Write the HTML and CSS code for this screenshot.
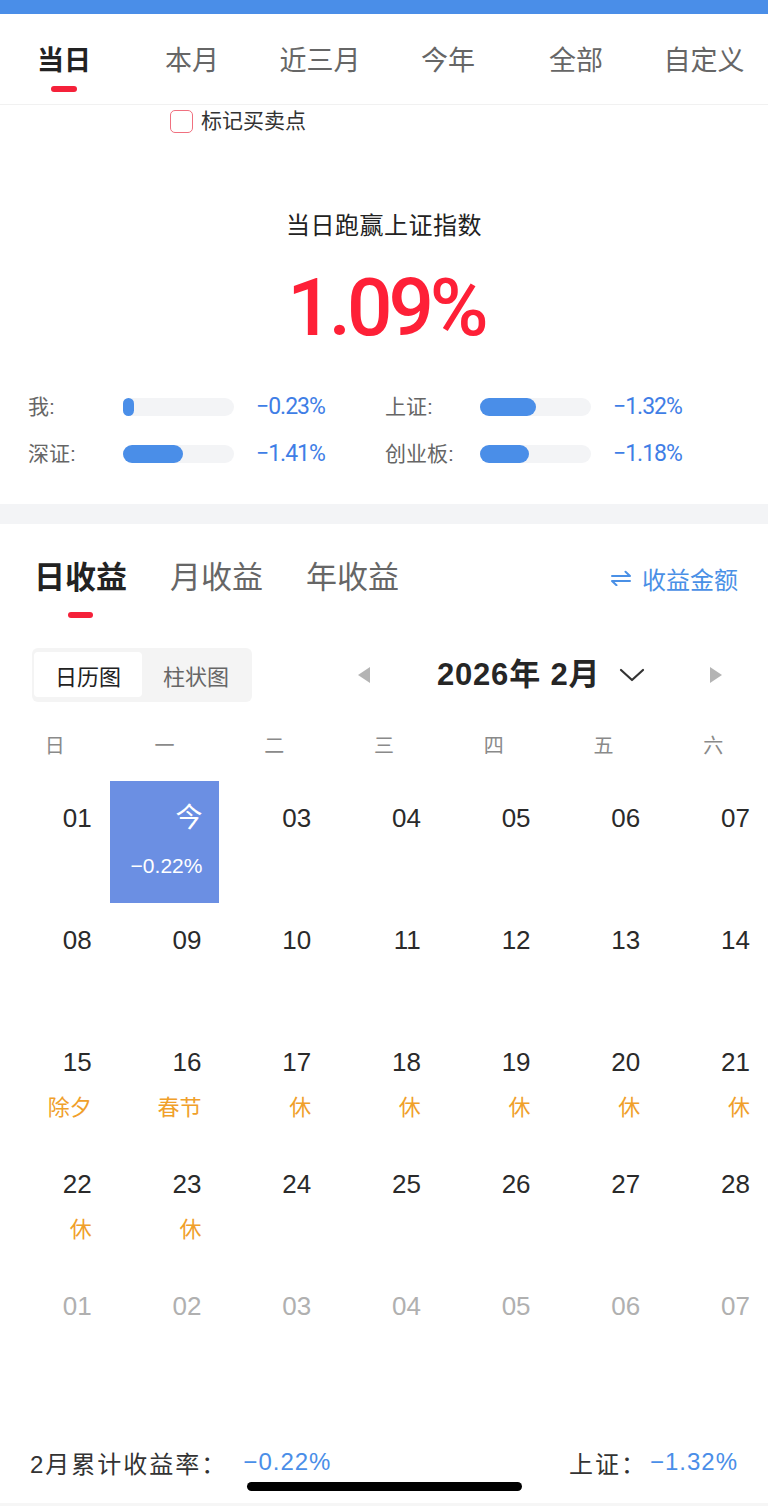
FILE: index.html
```html
<!DOCTYPE html>
<html lang="zh-CN">
<head>
<meta charset="utf-8">
<title>收益日历</title>
<link rel="stylesheet" href="styles.css">
</head>
<body>
<div class="page">
  <div class="topbar"></div>

  <nav class="period-tabs">
    <div class="ptab active"><span>当日</span><i class="uline"></i></div>
    <div class="ptab"><span>本月</span></div>
    <div class="ptab"><span>近三月</span></div>
    <div class="ptab"><span>今年</span></div>
    <div class="ptab"><span>全部</span></div>
    <div class="ptab"><span>自定义</span></div>
  </nav>

  <div class="mark-row">
    <span class="checkbox"></span>
    <span class="mark-text">标记买卖点</span>
  </div>

  <div class="summary-title">当日跑赢上证指数</div>
  <div class="summary-value">1.09%</div>

  <div class="stats">
    <div class="stat">
      <span class="stat-label">我:</span>
      <span class="track"><span class="fill" style="width:11px"></span></span>
      <span class="stat-value">−0.23%</span>
    </div>
    <div class="stat">
      <span class="stat-label">上证:</span>
      <span class="track"><span class="fill" style="width:56px"></span></span>
      <span class="stat-value">−1.32%</span>
    </div>
    <div class="stat">
      <span class="stat-label">深证:</span>
      <span class="track"><span class="fill" style="width:60px"></span></span>
      <span class="stat-value">−1.41%</span>
    </div>
    <div class="stat">
      <span class="stat-label">创业板:</span>
      <span class="track"><span class="fill" style="width:49px"></span></span>
      <span class="stat-value">−1.18%</span>
    </div>
  </div>

  <div class="band"></div>

  <div class="returns-head">
    <div class="rtabs">
      <div class="rtab active"><span>日收益</span><i class="uline"></i></div>
      <div class="rtab"><span>月收益</span></div>
      <div class="rtab"><span>年收益</span></div>
    </div>
    <div class="switch">
      <svg class="swap" width="22" height="16" viewBox="0 0 22 16"><path d="M2 6H20L15.5 1.8M20 11H2L6.5 15.2" fill="none" stroke="#4a90e6" stroke-width="2" stroke-linecap="round" stroke-linejoin="round"/></svg>
      <span>收益金额</span>
    </div>
  </div>

  <div class="toolbar">
    <div class="segmented">
      <div class="seg active">日历图</div>
      <div class="seg">柱状图</div>
    </div>
    <div class="month-nav">
      <svg class="prev" width="14" height="16" viewBox="0 0 14 16"><polygon points="13,0 13,16 1,8" fill="#b4b4b4"/></svg>
      <div class="month-title">2026年 2月</div>
      <svg class="chev" width="26" height="14" viewBox="0 0 26 14"><path d="M2 2L13 12L24 2" fill="none" stroke="#333" stroke-width="2.2" stroke-linecap="round" stroke-linejoin="round"/></svg>
      <svg class="next" width="14" height="16" viewBox="0 0 14 16"><polygon points="1,0 1,16 13,8" fill="#b4b4b4"/></svg>
    </div>
  </div>

  <div class="weekdays">
    <span>日</span><span>一</span><span>二</span><span>三</span><span>四</span><span>五</span><span>六</span>
  </div>

  <div class="calendar">
    <div class="day"><div class="num">01</div></div>
    <div class="day today"><div class="num">今</div><div class="sub">−0.22%</div></div>
    <div class="day"><div class="num">03</div></div>
    <div class="day"><div class="num">04</div></div>
    <div class="day"><div class="num">05</div></div>
    <div class="day"><div class="num">06</div></div>
    <div class="day"><div class="num">07</div></div>

    <div class="day"><div class="num">08</div></div>
    <div class="day"><div class="num">09</div></div>
    <div class="day"><div class="num">10</div></div>
    <div class="day"><div class="num">11</div></div>
    <div class="day"><div class="num">12</div></div>
    <div class="day"><div class="num">13</div></div>
    <div class="day"><div class="num">14</div></div>

    <div class="day"><div class="num">15</div><div class="sub holiday">除夕</div></div>
    <div class="day"><div class="num">16</div><div class="sub holiday">春节</div></div>
    <div class="day"><div class="num">17</div><div class="sub holiday">休</div></div>
    <div class="day"><div class="num">18</div><div class="sub holiday">休</div></div>
    <div class="day"><div class="num">19</div><div class="sub holiday">休</div></div>
    <div class="day"><div class="num">20</div><div class="sub holiday">休</div></div>
    <div class="day"><div class="num">21</div><div class="sub holiday">休</div></div>

    <div class="day"><div class="num">22</div><div class="sub holiday">休</div></div>
    <div class="day"><div class="num">23</div><div class="sub holiday">休</div></div>
    <div class="day"><div class="num">24</div></div>
    <div class="day"><div class="num">25</div></div>
    <div class="day"><div class="num">26</div></div>
    <div class="day"><div class="num">27</div></div>
    <div class="day"><div class="num">28</div></div>

    <div class="day other"><div class="num">01</div></div>
    <div class="day other"><div class="num">02</div></div>
    <div class="day other"><div class="num">03</div></div>
    <div class="day other"><div class="num">04</div></div>
    <div class="day other"><div class="num">05</div></div>
    <div class="day other"><div class="num">06</div></div>
    <div class="day other"><div class="num">07</div></div>
  </div>

  <div class="footer">
    <div class="foot-left">
      <span class="foot-label">2月累计收益率：</span>
      <span class="foot-value">−0.22%</span>
    </div>
    <div class="foot-right">
      <span class="foot-label">上证：</span>
      <span class="foot-value tight">−1.32%</span>
    </div>
  </div>
  <div class="bottom-band"></div>

  <div class="home-indicator"></div>
</div>
</body>
</html>
```

FILE: styles.css
```css
* { box-sizing: border-box; }

html, body {
  margin: 0;
  padding: 0;
  background: #ffffff;
}

body {
  font-family: "Liberation Sans", "Noto Sans CJK SC", sans-serif;
  color: #222;
}

.page {
  position: relative;
  width: 768px;
  height: 1506px;
  overflow: hidden;
}

.topbar {
  height: 14px;
  background: #4a8ee8;
}

/* period tabs */
.period-tabs {
  display: grid;
  grid-template-columns: repeat(6, 1fr);
  height: 91px;
  border-bottom: 1px solid #f1f1f1;
}

.ptab {
  display: flex;
  flex-direction: column;
  align-items: center;
  padding-top: 33px;
}

.ptab span {
  font-size: 27px;
  line-height: 28px;
  color: #666;
}

.ptab.active span {
  color: #222;
  font-weight: 600;
}

.uline {
  display: block;
  width: 26px;
  height: 6px;
  border-radius: 3px;
  background: #f5213a;
}

.ptab .uline { margin-top: 11px; }

/* mark row */
.mark-row {
  display: flex;
  align-items: center;
  height: 32px;
  padding-left: 170px;
}

.checkbox {
  width: 23px;
  height: 23px;
  border: 1.5px solid #f0707f;
  border-radius: 5px;
}

.mark-text {
  margin-left: 8px;
  font-size: 21px;
  line-height: 24px;
  color: #333;
}

/* summary */
.summary-title {
  margin-top: 77px;
  text-align: center;
  font-size: 24px;
  line-height: 24px;
  letter-spacing: 0.5px;
  color: #222;
}

.summary-value {
  margin-top: 30px;
  text-align: center;
  padding-left: 4px;
  font-family: Roboto, "Liberation Sans", sans-serif;
  font-weight: 500;
  font-size: 80px;
  line-height: 80px;
  letter-spacing: -4px;
  color: #fe2037;
}

.stats {
  display: grid;
  grid-template-columns: 357px 357px;
  grid-template-rows: 40px 40px;
  row-gap: 7px;
  margin-top: 39px;
  padding: 0 0 30px 28px;
}

.stat {
  display: flex;
  align-items: center;
}

.stat-label {
  width: 95px;
  font-size: 21px;
  line-height: 24px;
  color: #666;
}

.track {
  display: block;
  width: 111px;
  height: 18px;
  border-radius: 9px;
  background: #f3f4f6;
}

.fill {
  display: block;
  height: 18px;
  border-radius: 9px;
  background: #4a8ee8;
}

.stat-value {
  margin-left: 22px;
  font-family: Roboto, "Liberation Sans", sans-serif;
  font-size: 23px;
  line-height: 24px;
  letter-spacing: -1px;
  color: #3f7ee6;
}

.band {
  height: 20px;
  background: #f3f4f6;
}

/* returns head */
.returns-head {
  display: flex;
  justify-content: space-between;
  align-items: flex-start;
  padding: 39px 30px 0 34px;
}

.rtabs {
  display: flex;
  gap: 43px;
}

.rtab {
  display: flex;
  flex-direction: column;
  align-items: center;
}

.rtab span {
  font-size: 31px;
  line-height: 30px;
  color: #666;
}

.rtab.active span {
  color: #222;
  font-weight: 600;
}

.rtab .uline {
  margin-top: 19px;
  width: 25px;
}

.switch {
  display: flex;
  align-items: center;
  height: 30px;
  font-size: 24px;
  color: #4a90e6;
}

.swap { margin-right: 10px; }

/* toolbar */
.toolbar {
  display: flex;
  align-items: center;
  margin-top: 30px;
  height: 54px;
  padding-left: 32px;
}

.segmented {
  display: flex;
  width: 220px;
  height: 54px;
  padding: 4px 1px 5px 2px;
  border-radius: 6px;
  background: #f4f4f4;
}

.seg {
  width: 108px;
  display: flex;
  align-items: center;
  justify-content: center;
  font-size: 22px;
  color: #666;
  border-radius: 4px;
}

.seg.active {
  background: #ffffff;
  color: #222;
}

.month-nav {
  display: flex;
  align-items: center;
}

.prev { margin-left: 105px; }

.month-title {
  margin-left: 66px;
  width: 162px;
  font-size: 31px;
  line-height: 36px;
  font-weight: 700;
  letter-spacing: 0.8px;
  color: #262626;
  white-space: nowrap;
}

.chev { margin-left: 20px; }
.next { margin-left: 64px; }

/* weekdays */
.weekdays {
  display: grid;
  grid-template-columns: repeat(7, 1fr);
  height: 79px;
  padding-top: 33px;
  font-size: 20px;
  line-height: 22px;
  color: #8a8a8a;
  text-align: center;
}

/* calendar */
.calendar {
  display: grid;
  grid-template-columns: repeat(7, 1fr);
  grid-auto-rows: 122px;
}

.day {
  text-align: right;
  padding: 24px 18px 0 0;
}

.num {
  font-size: 26px;
  line-height: 26px;
  color: #2a2a2a;
}

.sub {
  margin-top: 23px;
  font-size: 22px;
  line-height: 20px;
}

.holiday { color: #f0a02a; }

.day.other .num { color: #b0b0b0; }

.day.today {
  background: #6b8fe3;
  padding-right: 17px;
}

.day.today .num {
  color: #ffffff;
  font-size: 27px;
}

.day.today .sub {
  margin-top: 25px;
  font-size: 21px;
  color: #ffffff;
}

/* footer */
.footer {
  display: flex;
  justify-content: space-between;
  height: 112px;
  padding: 57px 30px 0 30px;
}

.foot-left, .foot-right {
  display: flex;
  align-items: center;
  height: 28px;
}

.foot-label {
  font-size: 24px;
  letter-spacing: 2px;
  color: #333;
}

.foot-value {
  margin-left: 16px;
  font-size: 24px;
  letter-spacing: 1px;
  color: #4a8ee8;
}

.foot-value.tight { margin-left: 3px; }

.bottom-band {
  height: 3px;
  background: #f6f6f6;
}

.home-indicator {
  position: absolute;
  left: 247px;
  top: 1482px;
  width: 275px;
  height: 9px;
  border-radius: 5px;
  background: #000;
}
```
